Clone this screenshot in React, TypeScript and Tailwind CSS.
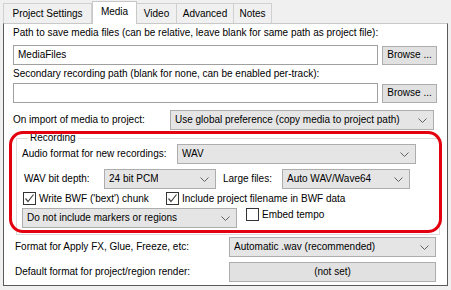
import React from "react";

function Chevron() {
  return (
    <svg width="9" height="5" viewBox="0 0 9 5" className="shrink-0">
      <polyline points="0.5,0.5 4.5,4.5 8.5,0.5" fill="none" stroke="#606060" strokeWidth="1" />
    </svg>
  );
}

function Combo({ text, className }: { text: string; className: string }) {
  return (
    <div
      className={`flex h-[20px] items-center justify-between border border-[#adadad] bg-[#e5e5e5] pl-[4px] pr-[6px] ${className}`}
    >
      <span className="truncate">{text}</span>
      <Chevron />
    </div>
  );
}

function Check({ checked, label }: { checked: boolean; label: string }) {
  return (
    <div className="flex items-center gap-[3px]">
      <div className="flex h-[13px] w-[13px] items-center justify-center border border-[#333] bg-white">
        {checked && (
          <svg width="11" height="11" viewBox="0 0 11 11">
            <polyline points="1.5,5.5 4,8.5 9.5,1.5" fill="none" stroke="#444" strokeWidth="1.2" />
          </svg>
        )}
      </div>
      <span>{label}</span>
    </div>
  );
}

const tabs = ["Project Settings", "Media", "Video", "Advanced", "Notes"];
const tabWidths = ["w-[89px]", "w-[45px]", "w-[41px]", "w-[58px]", "w-[39px]"];

export default function App() {
  return (
    <div
      className="relative h-[290px] w-[451px] overflow-hidden bg-[#f0f0f0] text-[10px] leading-[12px] text-black"
      style={{ fontFamily: '"Liberation Sans", Arial, sans-serif' }}
    >
      {/* Tabs */}
      <div className="flex h-[23px] items-end pl-[3px] pt-[1px]">
        {tabs.map((t, i) =>
          t === "Media" ? (
            <div
              key={t}
              className={`relative z-10 -mb-px flex h-[23px] items-center justify-center border border-b-0 border-[#c8c8c8] bg-white pb-[2px] ${tabWidths[i]}`}
            >
              {t}
            </div>
          ) : (
            <div
              key={t}
              className={`-ml-px flex h-[20px] items-center justify-center border border-b-0 border-[#d0d0d0] bg-[#f0f0f0] first:ml-0 ${tabWidths[i]}`}
            >
              {t}
            </div>
          )
        )}
      </div>

      {/* Panel */}
      <div className="ml-[3px] flex h-[263px] w-[445px] flex-col border border-[#5a5a5a] border-t-[#c8c8c8] bg-white pl-[9px] pt-[3px]">
        <div>Path to save media files (can be relative, leave blank for same path as project file):</div>
        <div className="mt-[6px] flex items-center">
          <div className="flex h-[20px] w-[365px] items-center border border-[#a0a0a0] bg-white pl-[4px]">MediaFiles</div>
          <button className="ml-[4px] h-[19px] w-[55px] border border-[#adadad] bg-[#e1e1e1]">Browse ...</button>
        </div>
        <div className="mt-[3px]">Secondary recording path (blank for none, can be enabled per-track):</div>
        <div className="mt-[3px] flex items-center">
          <div className="h-[20px] w-[365px] border border-[#a0a0a0] bg-white" />
          <button className="ml-[4px] h-[19px] w-[55px] border border-[#adadad] bg-[#e1e1e1]">Browse ...</button>
        </div>
        <div className="mt-[7px] flex items-center">
          <div className="w-[157px]">On import of media to project:</div>
          <Combo text="Use global preference (copy media to project path)" className="w-[264px]" />
        </div>

        {/* Recording group */}
        <fieldset className="ml-[3px] mt-[2px] w-[424px] border border-[#dcdcdc] pb-[6px] pl-[5px]">
          <legend className="ml-[6px] px-[2px]">Recording</legend>
          <div className="flex items-center">
            <div className="w-[155px]">Audio format for new recordings:</div>
            <Combo text="WAV" className="w-[239px]" />
          </div>
          <div className="mt-[5px] flex items-center">
            <div className="w-[82px] pl-[2px]">WAV bit depth:</div>
            <Combo text="24 bit PCM" className="w-[112px]" />
            <div className="ml-[7px] w-[59px]">Large files:</div>
            <Combo text="Auto WAV/Wave64" className="w-[128px]" />
          </div>
          <div className="mt-[3px] flex h-[13px] items-center pl-[1px]">
            <div className="w-[143px]">
              <Check checked label="Write BWF ('bext') chunk" />
            </div>
            <Check checked label="Include project filename in BWF data" />
          </div>
          <div className="mt-[3px] flex items-start">
            <Combo text="Do not include markers or regions" className="w-[215px]" />
            <div className="ml-[9px]">
              <Check checked={false} label="Embed tempo" />
            </div>
          </div>
        </fieldset>

        <div className="mt-[2px] flex items-center pl-[2px]">
          <div className="w-[214px]">Format for Apply FX, Glue, Freeze, etc:</div>
          <Combo text="Automatic .wav (recommended)" className="w-[207px]" />
        </div>
        <div className="mt-[5px] flex items-center pl-[2px]">
          <div className="w-[214px]">Default format for project/region render:</div>
          <button className="h-[20px] w-[207px] border border-[#adadad] bg-[#e1e1e1]">(not set)</button>
        </div>
      </div>

      {/* Red highlight annotation */}
      <div className="pointer-events-none absolute left-[9px] top-[131px] h-[102px] w-[433px] rounded-[14px] border-[3px] border-[#e3000f]" />
    </div>
  );
}
